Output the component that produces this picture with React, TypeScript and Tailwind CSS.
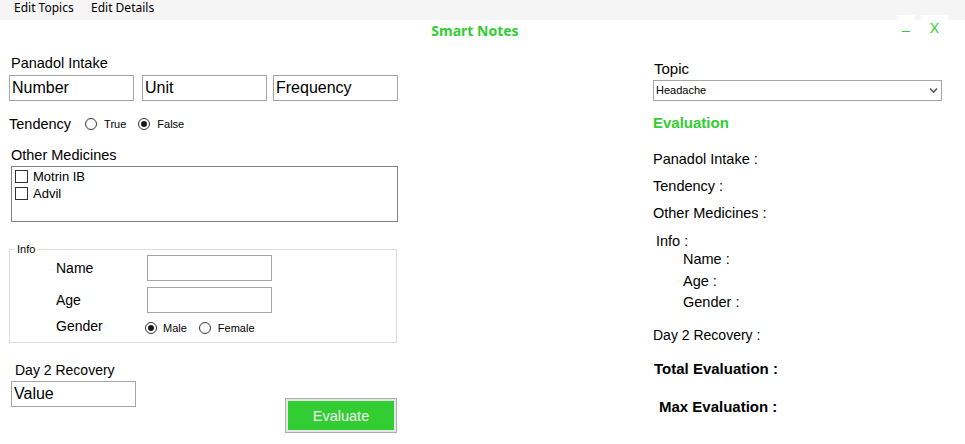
import React from "react";

const Radio = ({ checked }: { checked?: boolean }) => (
  <span className="flex h-[12px] w-[12px] shrink-0 items-center justify-center rounded-full border border-[#333333] bg-white">
    {checked && <span className="h-[6px] w-[6px] rounded-full bg-[#1a1a1a]" />}
  </span>
);

const Check = () => <span className="h-[13px] w-[13px] shrink-0 border border-[#333333] bg-white" />;

const TextBox = ({ text, cls = "" }: { text?: string; cls?: string }) => (
  <div className={`flex h-[26px] w-[125px] items-center border border-[#a5a5a5] bg-white pl-[2px] text-[16px] leading-[24px] ${cls}`}>
    {text}
  </div>
);

export default function App() {
  return (
    <div className="relative h-[444px] w-[965px] overflow-hidden bg-white font-['Liberation_Sans',Arial,sans-serif] text-black">
      {/* menu bar */}
      <div className="flex h-[20px] bg-[#f5f5f5] pl-[14px] font-['Noto_Sans',sans-serif] text-[12px] leading-[16px]">
        <span className="w-[77px]">Edit Topics</span>
        <span>Edit Details</span>
      </div>

      {/* window buttons */}
      <div className="absolute left-[897px] top-[15px] h-[26px] w-[18px] bg-white text-center text-[14px] leading-[19px] text-[#32cd32]">
        _
      </div>
      <div className="absolute left-[921px] top-[15px] h-[26px] w-[27px] bg-white text-center text-[14px] leading-[26px] text-[#32cd32]">
        X
      </div>

      {/* title */}
      <div className="h-[20px] w-[950px] pt-[3px] text-center">
        <div className="font-['Noto_Sans',sans-serif] text-[14px] font-bold leading-[16px] text-[#32cd32]">
          Smart Notes
        </div>
      </div>

      <div className="flex pl-[9px]">
        {/* left column */}
        <div className="flex w-[390px] flex-col">
          <div className="mt-[15px] pl-[2px] text-[14.5px] leading-[16px]">Panadol Intake</div>
          <div className="mt-[4px] flex">
            <TextBox text="Number" />
            <TextBox text="Unit" cls="ml-[8px]" />
            <TextBox text="Frequency" cls="ml-[6px]" />
          </div>

          <div className="mt-[15px] flex h-[16px] items-center">
            <span className="text-[14.5px] leading-[16px]">Tendency</span>
            <span className="ml-[14px]">
              <Radio />
            </span>
            <span className="ml-[7px] text-[11px] leading-[13px]">True</span>
            <span className="ml-[12px]">
              <Radio checked />
            </span>
            <span className="ml-[7px] text-[11px] leading-[13px]">False</span>
          </div>

          <div className="mt-[15px] pl-[2px] text-[14.5px] leading-[16px]">Other Medicines</div>
          <div className="ml-[2px] mt-[3px] h-[56px] w-[387px] border border-[#828282] pl-[3px] pt-[1px]">
            <div className="flex h-[17px] items-center">
              <Check />
              <span className="ml-[5px] text-[13px] leading-[15px]">Motrin IB</span>
            </div>
            <div className="flex h-[17px] items-center">
              <Check />
              <span className="ml-[5px] text-[13px] leading-[15px]">Advil</span>
            </div>
          </div>

          {/* Info group */}
          <div className="relative mt-[27px] h-[94px] w-[388px] border border-[#dcdcdc] pl-[46px] pt-[5px]">
            <span className="absolute left-[5px] top-[-7px] bg-white px-[2px] text-[11px] leading-[12px]">Info</span>
            <div className="flex h-[26px] items-center">
              <span className="w-[91px] text-[14px] leading-[16px]">Name</span>
              <div className="h-[26px] w-[125px] border border-[#a5a5a5]" />
            </div>
            <div className="mt-[6px] flex h-[26px] items-center">
              <span className="w-[91px] text-[14px] leading-[16px]">Age</span>
              <div className="h-[26px] w-[125px] border border-[#a5a5a5]" />
            </div>
            <div className="mt-[5px] flex h-[16px] items-start">
              <span className="w-[89px] text-[14px] leading-[16px]">Gender</span>
              <span className="mt-[4px]">
                <Radio checked />
              </span>
              <span className="ml-[6px] mt-[4px] text-[11px] leading-[13px]">Male</span>
              <span className="ml-[12px] mt-[4px]">
                <Radio />
              </span>
              <span className="ml-[7px] mt-[4px] text-[11px] leading-[13px]">Female</span>
            </div>
          </div>

          <div className="mt-[19px] pl-[6px] text-[14px] leading-[16px]">Day 2 Recovery</div>
          <div className="mt-[3px] flex items-start">
            <TextBox text="Value" cls="ml-[2px]" />
            <div className="ml-[149px] mt-[17px] h-[35px] w-[112px] border border-[#adadad] bg-[#e6e6e6] p-[2px]">
              <div className="flex h-full w-full items-center justify-center bg-[#32cd32] text-[14.5px] leading-[16px] text-[#f0f0f0]">
                Evaluate
              </div>
            </div>
          </div>
        </div>

        {/* right column */}
        <div className="ml-[254px] flex w-[289px] flex-col text-[14.5px] leading-[16px]">
          <div className="mt-[21px] pl-[1px] text-[15px]">Topic</div>
          <div className="mt-[3px] flex h-[21px] items-center justify-between border border-[#a5a5a5] pl-[2px] pr-[3px]">
            <span className="text-[11px] leading-[13px]">Headache</span>
            <svg width="9" height="7" viewBox="0 0 9 7">
              <polyline points="1,1.5 4.5,5 8,1.5" fill="none" stroke="#555555" strokeWidth="1.6" />
            </svg>
          </div>
          <div className="mt-[13px] text-[15px] font-bold leading-[18px] text-[#32cd32]">Evaluation</div>
          <div className="mt-[19px]">Panadol Intake :</div>
          <div className="mt-[11px]">Tendency :</div>
          <div className="mt-[11px]">Other Medicines :</div>
          <div className="mt-[12px] pl-[3px]">Info :</div>
          <div className="mt-[2px] pl-[30px]">Name :</div>
          <div className="mt-[6px] pl-[30px]">Age :</div>
          <div className="mt-[5px] pl-[30px]">Gender :</div>
          <div className="mt-[17px] text-[14px]">Day 2 Recovery :</div>
          <div className="mt-[17px] pl-[1px] text-[15px] font-bold leading-[18px]">Total Evaluation :</div>
          <div className="mt-[20px] pl-[6px] text-[15px] font-bold leading-[18px]">Max Evaluation :</div>
        </div>
      </div>
    </div>
  );
}
